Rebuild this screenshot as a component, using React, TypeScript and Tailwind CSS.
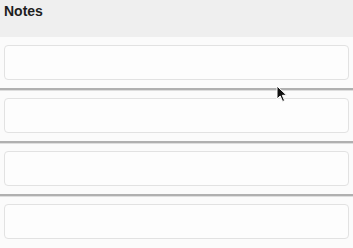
import React from "react";

const rows = [0, 1, 2, 3];

const Cursor = () => (
  <svg
    className="absolute left-[276px] top-[85px]"
    width="12"
    height="18"
    viewBox="0 0 12 18"
  >
    <path
      d="M1 1 L1 14 L4.2 11 L6.6 16.5 L8.6 15.6 L6.3 10.3 L10.6 10.3 Z"
      fill="#111"
      stroke="#fff"
      strokeWidth="1"
      strokeLinejoin="round"
    />
  </svg>
);

export default function App() {
  return (
    <div className="relative w-[353px] h-[248px] overflow-hidden bg-[#fbfbfb] font-['Liberation_Sans',Arial,sans-serif]">
      {/* header */}
      <div className="h-[37px] bg-[#efefef] px-[4px] pt-[2px]">
        <h1 className="text-[14px] leading-[18px] font-bold text-[#1e1e1e]">Notes</h1>
      </div>

      {/* note fields */}
      {rows.map((i) => (
        <div
          key={i}
          className={
            i < rows.length - 1
              ? "px-[4px] pt-[8px] pb-[8px] border-b-2 border-[#b0b0b0] shadow-[0_1px_0_#dedede]"
              : "px-[4px] py-[8px]"
          }
        >
          <div className="h-[35px] rounded-[4px] border border-[#e2e2e2] bg-[#fdfdfd]" />
        </div>
      ))}

      <Cursor />
    </div>
  );
}
